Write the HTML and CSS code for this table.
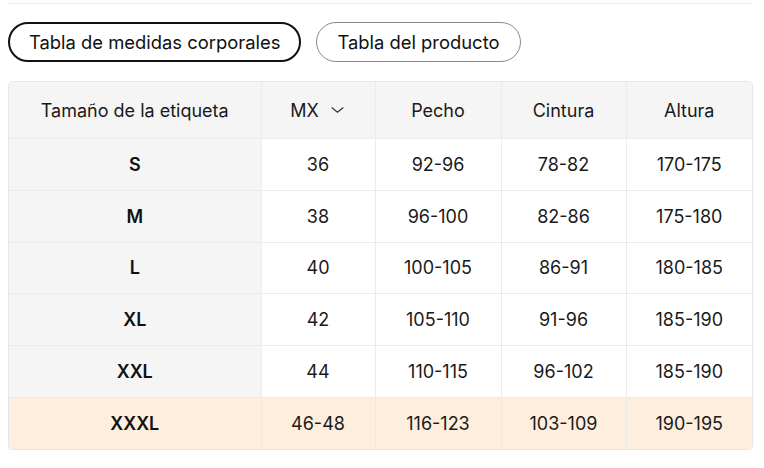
FILE: index.html
```html
<!DOCTYPE html>
<html lang="es">
<head>
<meta charset="utf-8">
<link rel="stylesheet" href="styles.css">
</head>
<body>
<div class="page">
  <div class="tabs">
    <button class="tab active">Tabla de medidas corporales</button>
    <button class="tab">Tabla del producto</button>
  </div>
  <div class="table-wrap">
    <table class="sizes">
      <colgroup>
        <col class="c1"><col class="c2"><col class="c3"><col class="c4"><col class="c5">
      </colgroup>
      <thead>
        <tr>
          <th>Tamaño de la etiqueta</th>
          <th><span class="unit">MX <svg class="chev" width="13" height="8" viewBox="0 0 13 8"><path d="M1 1.8 L6.5 6.2 L12 1.8" fill="none" stroke="#333" stroke-width="1.2" stroke-linecap="round" stroke-linejoin="round"/></svg></span></th>
          <th>Pecho</th>
          <th>Cintura</th>
          <th>Altura</th>
        </tr>
      </thead>
      <tbody>
        <tr><th>S</th><td>36</td><td>92-96</td><td>78-82</td><td>170-175</td></tr>
        <tr><th>M</th><td>38</td><td>96-100</td><td>82-86</td><td>175-180</td></tr>
        <tr><th>L</th><td>40</td><td>100-105</td><td>86-91</td><td>180-185</td></tr>
        <tr><th>XL</th><td>42</td><td>105-110</td><td>91-96</td><td>185-190</td></tr>
        <tr><th>XXL</th><td>44</td><td>110-115</td><td>96-102</td><td>185-190</td></tr>
        <tr class="hl"><th>XXXL</th><td>46-48</td><td>116-123</td><td>103-109</td><td>190-195</td></tr>
      </tbody>
    </table>
  </div>
</div>
</body>
</html>
```
FILE: styles.css
```css
* { box-sizing: border-box; }
html, body { margin: 0; padding: 0; background: #fff; }
body {
  font-family: Inter, "Noto Sans", "Liberation Sans", sans-serif;
  color: #111;
}
.page {
  margin: 3px 11px 0 8px;
  border-top: 1px solid #ececec;
}
.tabs {
  display: flex;
  gap: 15px;
  padding-top: 18px;
  padding-bottom: 19px;
}
.tab {
  font-family: inherit;
  font-size: 18.4px;
  color: #111;
  background: #fff;
  height: 40px;
  padding: 0 20px;
  border: 1px solid #8a8a8a;
  border-radius: 20px;
  cursor: pointer;
}
.tab.active {
  border: 2px solid #111;
  padding: 0 19px;
}
.table-wrap {
  width: 745px;
  border: 1px solid #e6e6e6;
  border-radius: 5px;
  overflow: hidden;
  box-shadow: 0 1px 1px rgba(0,0,0,0.08);
}
.sizes {
  width: 100%;
  border-collapse: collapse;
  table-layout: fixed;
  font-size: 18px;
}
.c1 { width: 252px; }
.c2 { width: 114px; }
.c3 { width: 126px; }
.c4 { width: 125px; }
.c5 { width: 126px; }
.sizes th, .sizes td {
  text-align: center;
  border-right: 1px solid #ebebeb;
  border-bottom: 1px solid #ebebeb;
  height: 51.8px;
  padding: 0;
  font-weight: 400;
}
.sizes tr > *:last-child { border-right: none; }
.sizes tbody tr:last-child > * { border-bottom: none; }
.sizes thead th {
  background: #f5f5f5;
  height: 56.5px;
  color: #1a1a1a;
}
.sizes tbody th {
  background: #f5f5f5;
  font-weight: 600;
  color: #111;
}
.sizes td { background: #fff; color: #1a1a1a; }
.sizes tr.hl th, .sizes tr.hl td { background: #fdeede; }
.unit { display: inline-flex; align-items: center; gap: 12px; padding-right: 2px; }
.chev { display: block; }
```
